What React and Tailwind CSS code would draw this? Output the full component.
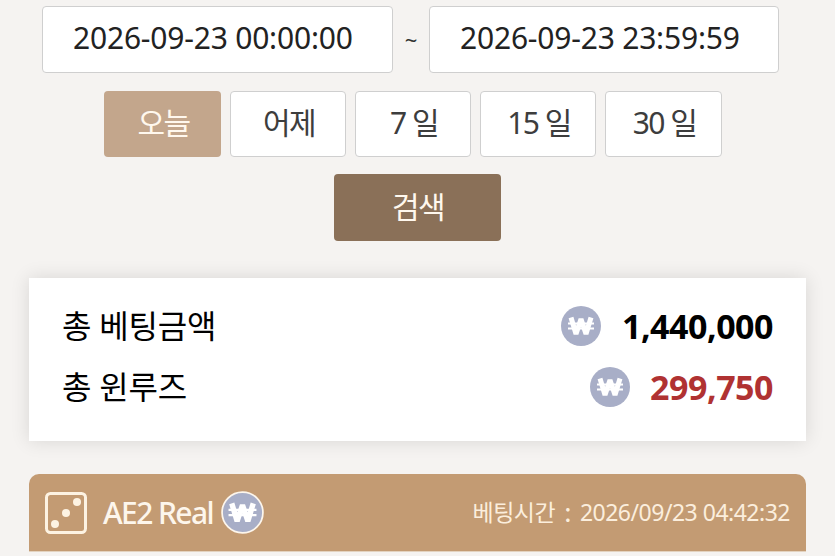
const FONT = "font-['Noto_Sans','Noto_Sans_CJK_KR',sans-serif]";

function WonIcon({ size = 40, ring = false }) {
  return (
    <svg width={size} height={size} viewBox="0 0 40 40" className="shrink-0">
      <circle cx="20" cy="20" r={ring ? 19 : 20} fill="#a8aec7" stroke={ring ? '#fdf6ec' : 'none'} strokeWidth={ring ? 1.6 : 0} />
      <path d="M10 11.5 L15 28 L20 13 L25 28 L30 11.5" fill="none" stroke="#fff" strokeWidth="5" strokeLinejoin="bevel" />
      <path d="M7 17.5 H33 M7 22.5 H33" stroke="#fff" strokeWidth="2.2" />
    </svg>
  );
}

function DiceIcon() {
  return (
    <svg width="42" height="42" viewBox="0 0 42 42" className="shrink-0">
      <rect x="1.5" y="1.5" width="39" height="39" rx="4" fill="none" stroke="#fdf3e3" strokeWidth="3" />
      <circle cx="32" cy="10" r="4" fill="#fdf3e3" />
      <circle cx="21" cy="21" r="4" fill="#fdf3e3" />
      <circle cx="10" cy="32" r="4" fill="#fdf3e3" />
    </svg>
  );
}

const ranges = ['오늘', '어제', '7 일', '15 일', '30 일'];

export default function App() {
  return (
    <div className={`${FONT} w-[835px] h-[556px] overflow-hidden bg-[#f5f3f1] pt-[6px]`}>
      {/* Date range */}
      <div className="flex items-center pl-[42px]">
        <div className="w-[351px] h-[67px] bg-white border border-[#cfcfcf] rounded-[4px] flex items-center pl-[30px] pb-[5px] text-[#222] text-[30px] tracking-[-0.2px]">
          2026-09-23 00:00:00
        </div>
        <span className="w-[36px] text-center text-[#333] text-[22px]">~</span>
        <div className="w-[350px] h-[67px] bg-white border border-[#cfcfcf] rounded-[4px] flex items-center pl-[30px] pb-[5px] text-[#222] text-[30px] tracking-[-0.2px]">
          2026-09-23 23:59:59
        </div>
      </div>

      <div className="flex gap-[9px] pl-[104px] mt-[18px]">
        {ranges.map((r, i) => (
          <button
            key={r}
            className={
              i === 0
                ? 'w-[117px] h-[66px] rounded-[4px] pl-[2px] pb-[3px] bg-[#c3a68c] text-[#fff8ee] text-[30px] tracking-[-1.5px]'
                : i === 4
                ? 'w-[117px] h-[66px] rounded-[4px] pl-[2px] pb-[3px] bg-white border border-[#cfcfcf] text-[#3d3d3d] text-[30px] tracking-[-1.5px]'
                : 'w-[116px] h-[66px] rounded-[4px] pl-[2px] pb-[3px] bg-white border border-[#cfcfcf] text-[#3d3d3d] text-[30px] tracking-[-1.5px]'
            }
          >
            {r}
          </button>
        ))}
      </div>

      <div className="flex justify-center mt-[17px] pr-[1px]">
        <button className="w-[167px] h-[67px] rounded-[4px] pl-[2px] pb-[2px] bg-[#8a7058] text-[#fff8ee] text-[30px] tracking-[-1.5px]">
          검색
        </button>
      </div>

      {/* Totals */}
      <div className="mt-[37px] mx-[29px] w-[777px] h-[163px] bg-white shadow-[0_0_18px_rgba(0,0,0,0.12)] pl-[33px] pr-[33px] pt-[28px]">
        <div className="flex items-center justify-between h-[40px]">
          <span className="text-black text-[32px] tracking-[-0.2px]">총 베팅금액</span>
          <div className="flex items-center gap-[21px]">
            <WonIcon />
            <span className="text-black text-[34px] font-bold tracking-[-0.5px]">1,440,000</span>
          </div>
        </div>
        <div className="flex items-center justify-between h-[40px] mt-[21px]">
          <span className="text-black text-[32px] tracking-[-0.2px]">총 윈루즈</span>
          <div className="flex items-center gap-[20px]">
            <WonIcon />
            <span className="text-[#b03232] text-[34px] font-bold tracking-[-0.5px]">299,750</span>
          </div>
        </div>
      </div>

      {/* Bet history card */}
      <div className="mt-[33px] mx-[29px] w-[777px] bg-white rounded-t-[10px] overflow-hidden">
        <div className="h-[78px] bg-[#c39b73] flex items-center justify-between pl-[16px] pr-[16px] border-b border-[#e3d3c0]">
          <div className="flex items-center">
            <DiceIcon />
            <span className="ml-[16px] text-[#fdf6ec] text-[30px] font-medium tracking-[-1.6px]">AE2 Real</span>
            <span className="ml-[8px] flex"><WonIcon size={43} ring /></span>
          </div>
          <div className="flex items-center text-[#fbeedd] text-[23px] tracking-[-0.5px]">
            <span>베팅시간</span>
            <span className="mx-[9px] font-['Noto_Sans_CJK_KR'] text-[26px] leading-none pb-[4px]">:</span>
            <span>2026/09/23 04:42:32</span>
          </div>
        </div>
      </div>
    </div>
  );
}
